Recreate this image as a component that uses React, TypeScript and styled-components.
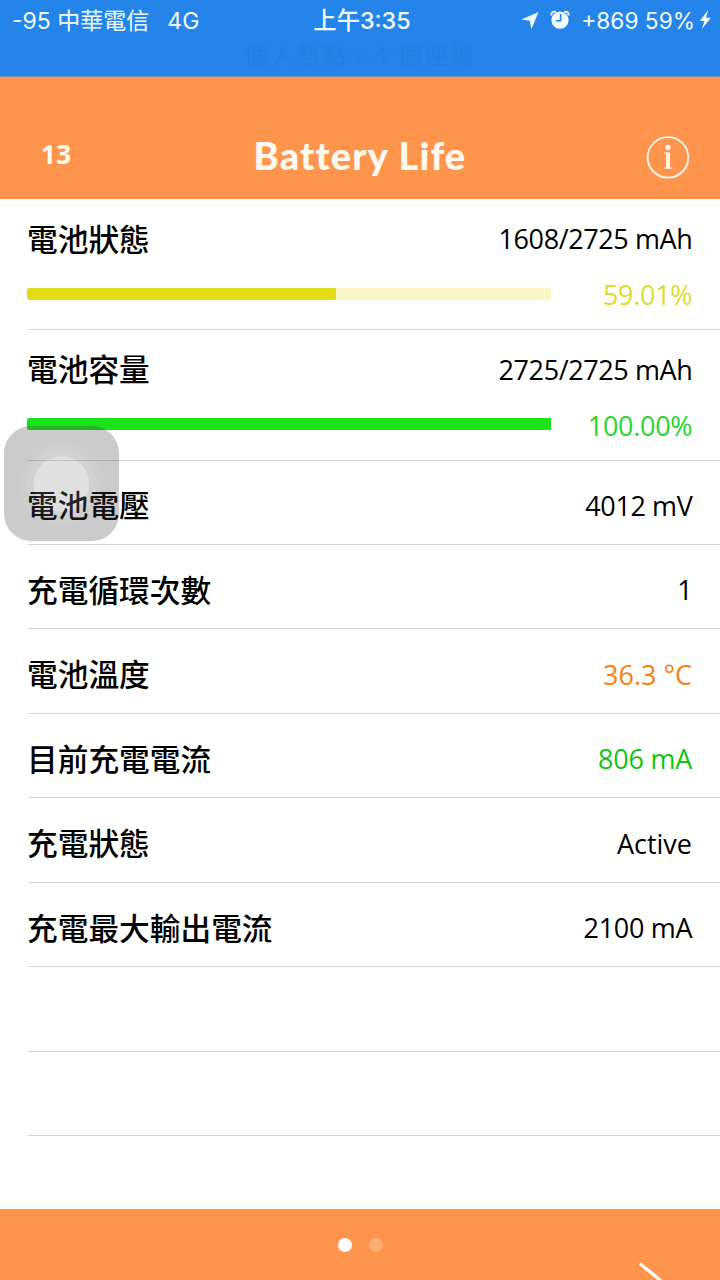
import React from "react";
import styled, { createGlobalStyle } from "styled-components";

const GlobalStyle = createGlobalStyle`
  * { box-sizing: border-box; }
  html, body { margin: 0; padding: 0; background: #fff; }
  body { overflow: hidden; }
`;

const Screen = styled.main`
  position: relative;
  display: flex;
  flex-direction: column;
  width: 720px;
  height: 1280px;
  overflow: hidden;
  background: #fff;
  color: #000;
  font-family: "Open Sans", "Noto Sans CJK TC", sans-serif;
`;

const StatusArea = styled.div`
  flex: none;
  height: 77px;
  background: #2484e9;
  border-bottom: 1px solid #7c8bb0;
  color: #f2fcff;
  font-family: Inter, "Noto Sans CJK TC", sans-serif;
`;

const StatusBar = styled.div`
  display: grid;
  grid-template-columns: 1fr auto 1fr;
  height: 40px;
  padding: 1px 6px 0 12px;
  align-items: center;
  white-space: pre;
`;

const Carrier = styled.div`
  display: flex;
  gap: 18px;
  font-size: 23px;
  line-height: 40px;
`;

const Clock = styled.div`
  font-size: 23.3px;
  line-height: 40px;
  font-weight: 500;
  margin-left: -2px;
`;

const Indicators = styled.div`
  display: flex;
  justify-content: flex-end;
  align-items: center;
  font-size: 22.7px;
  line-height: 40px;
`;

const HotspotText = styled.div`
  height: 32px;
  line-height: 32px;
  font-size: 24px;
  letter-spacing: 1.6px;
  text-align: center;
  color: #2280e4;
  white-space: pre;
`;

const Header = styled.header`
  flex: none;
  display: grid;
  grid-template-columns: 1fr auto 1fr;
  align-items: center;
  height: 122px;
  padding: 38px 30px 0 41px;
  background: #ff954d;
  color: #fffaf0;
  font-family: Lato, sans-serif;
`;

const Counter = styled.span`
  font-family: "Open Sans", sans-serif;
  font-size: 26px;
  line-height: 30px;
  font-weight: 700;
  letter-spacing: 0.4px;
  margin-top: -6px;
`;

const Title = styled.h1`
  margin: -4px 0 0 -11px;
  font-size: 38px;
  line-height: 44px;
  font-weight: 900;
  letter-spacing: 1.15px;
  font-variant-ligatures: none;
  white-space: nowrap;
`;

const InfoButton = styled.button`
  justify-self: end;
  width: 44px;
  height: 44px;
  padding: 0;
  border: 0;
  background: none;
`;

const List = styled.section`
  flex: 1;
  min-height: 0;
  overflow: hidden;
`;

const Row = styled.div<{ $tall?: boolean }>`
  display: flex;
  flex-direction: column;
  justify-content: ${(p) => (p.$tall ? "flex-start" : "center")};
  height: ${(p) => (p.$tall ? "130.8px" : "84.45px")};
  margin-left: 28px;
  padding: ${(p) => (p.$tall ? "18px 28px 0 0" : "7px 28px 0 0")};
  border-bottom: 1px solid #d4d4d4;
`;

const Line = styled.div`
  display: flex;
  justify-content: space-between;
  align-items: center;
  height: 44px;
`;

const Label = styled.span`
  margin: -3px 0 0 -1px;
  font-family: "Noto Sans CJK TC", sans-serif;
  font-size: 30.7px;
  line-height: 44px;
  font-weight: 500;
  white-space: nowrap;
`;

const Value = styled.span<{ $color?: string; $spacing?: number }>`
  font-size: 27px;
  line-height: 44px;
  letter-spacing: ${(p) => p.$spacing ?? -0.4}px;
  margin-right: ${(p) => p.$spacing ?? -0.4}px;
  color: ${(p) => p.$color ?? "#000"};
  white-space: nowrap;
`;

const MeterLine = styled.div`
  display: flex;
  justify-content: space-between;
  align-items: center;
  height: 44px;
  margin: 12px 0 0 -1px;
`;

const Track = styled.div<{ $color: string }>`
  width: 524px;
  height: 12px;
  margin-top: -3px;
  border-radius: 2px 0 0 2px;
  overflow: hidden;
  background: ${(p) => p.$color};
`;

const Fill = styled.div<{ $color: string }>`
  height: 100%;
  background: ${(p) => p.$color};
`;

const Footer = styled.footer`
  flex: none;
  display: grid;
  grid-template-columns: 1fr auto 1fr;
  height: 71px;
  background: #ff954d;
`;

const Dots = styled.div`
  grid-column: 2;
  display: flex;
  gap: 17px;
  padding-top: 29px;
`;

const Dot = styled.span<{ $active?: boolean }>`
  width: 14px;
  height: 14px;
  border-radius: 50%;
  background: ${(p) => (p.$active ? "#fff" : "#ffae76")};
`;

const NextArrow = styled.svg`
  justify-self: end;
  align-self: end;
  margin-right: 50px;
`;

const AssistiveTouch = styled.div`
  position: absolute;
  left: 4px;
  top: 426px;
  width: 115px;
  height: 115px;
  border-radius: 27px;
  background: radial-gradient(
    circle at 57.5px 58px,
    rgba(135, 135, 135, 0.26) 27.3px,
    rgba(90, 90, 90, 0.28) 28.1px,
    rgba(90, 90, 90, 0.28) 34.6px,
    rgba(70, 70, 70, 0.27) 35.4px,
    rgba(70, 70, 70, 0.27) 41px,
    rgba(60, 60, 60, 0.267) 41.8px
  );
`;

type Entry = {
  label: string;
  value: string;
  color?: string;
  spacing?: number;
  meter?: { percent: number; text: string; color: string; textColor: string; track: string };
};

const entries: Entry[] = [
  {
    label: "電池狀態",
    value: "1608/2725 mAh",
    meter: { percent: 59.01, text: "59.01%", color: "#e2dc16", textColor: "#dddb2c", track: "#f8f5c6" },
  },
  {
    label: "電池容量",
    value: "2725/2725 mAh",
    meter: { percent: 100, text: "100.00%", color: "#19e319", textColor: "#27d62b", track: "#c6f8c6" },
  },
  { label: "電池電壓", value: "4012 mV" },
  { label: "充電循環次數", value: "1" },
  { label: "電池溫度", value: "36.3 °C", color: "#f68212", spacing: 0 },
  { label: "目前充電電流", value: "806 mA", color: "#12c412", spacing: -0.2 },
  { label: "充電狀態", value: "Active", spacing: 0 },
  { label: "充電最大輸出電流", value: "2100 mA", spacing: -0.3 },
  { label: "", value: "" },
  { label: "", value: "" },
];

export default function App() {
  return (
    <Screen>
      <GlobalStyle />
      <StatusArea>
        <StatusBar>
          <Carrier>
            <span>-95 中華電信</span>
            <span>4G</span>
          </Carrier>
          <Clock>上午3:35</Clock>
          <Indicators>
            <svg width="66" height="40" viewBox="0 0 66 40" fill="#f2fcff">
              <path d="M6.4 18.4 23.5 11 16.4 28.2 14.8 19.8Z" />
              <circle cx="45" cy="19.2" r="8.6" />
              <path d="M36.4 14.4C36 11.4 38.2 10.2 40.8 10.8M53.6 14.4C54 11.4 51.8 10.2 49.2 10.8" fill="none" stroke="#f2fcff" strokeWidth="2" />
              <path d="M45.6 13V19.8H40.8" fill="none" stroke="#2484e9" strokeWidth="1.6" />
            </svg>
            <span>+869 59%</span>
            <svg width="19" height="40" viewBox="0 0 19 40" fill="#f2fcff">
              <path d="M13.2 9 4.8 20H9.4L7 28 15.8 16.8H11Z" />
            </svg>
          </Indicators>
        </StatusBar>
        <HotspotText>個人熱點：4 個連線</HotspotText>
      </StatusArea>

      <Header>
        <Counter>13</Counter>
        <Title>Battery Life</Title>
        <InfoButton aria-label="Info">
          <svg width="44" height="44" viewBox="0 0 44 44" fill="#fffaf0">
            <circle cx="22" cy="22.4" r="20.3" fill="none" stroke="#fffaf0" strokeWidth="1.8" />
            <circle cx="22" cy="12.4" r="2.7" />
            <path d="M18.3 17.4H24V32.4H26V33.8H18V32.4H20.2V18.7H18.3Z" />
          </svg>
        </InfoButton>
      </Header>

      <List>
        {entries.map((e, i) => (
          <Row key={i} $tall={!!e.meter}>
            <Line>
              <Label>{e.label}</Label>
              <Value $color={e.color} $spacing={e.spacing}>{e.value}</Value>
            </Line>
            {e.meter && (
              <MeterLine>
                <Track $color={e.meter.track}>
                  <Fill $color={e.meter.color} style={{ width: `${e.meter.percent}%` }} />
                </Track>
                <Value $color={e.meter.textColor} $spacing={-0.3}>{e.meter.text}</Value>
              </MeterLine>
            )}
          </Row>
        ))}
      </List>

      <Footer>
        <Dots>
          <Dot $active />
          <Dot />
        </Dots>
        <NextArrow width="34" height="20" viewBox="0 0 34 20">
          <path d="M5 4.5 27 22.5 5 41" fill="none" stroke="#fffaf0" strokeWidth="3.4" strokeLinecap="round" />
        </NextArrow>
      </Footer>

      <AssistiveTouch />
    </Screen>
  );
}
